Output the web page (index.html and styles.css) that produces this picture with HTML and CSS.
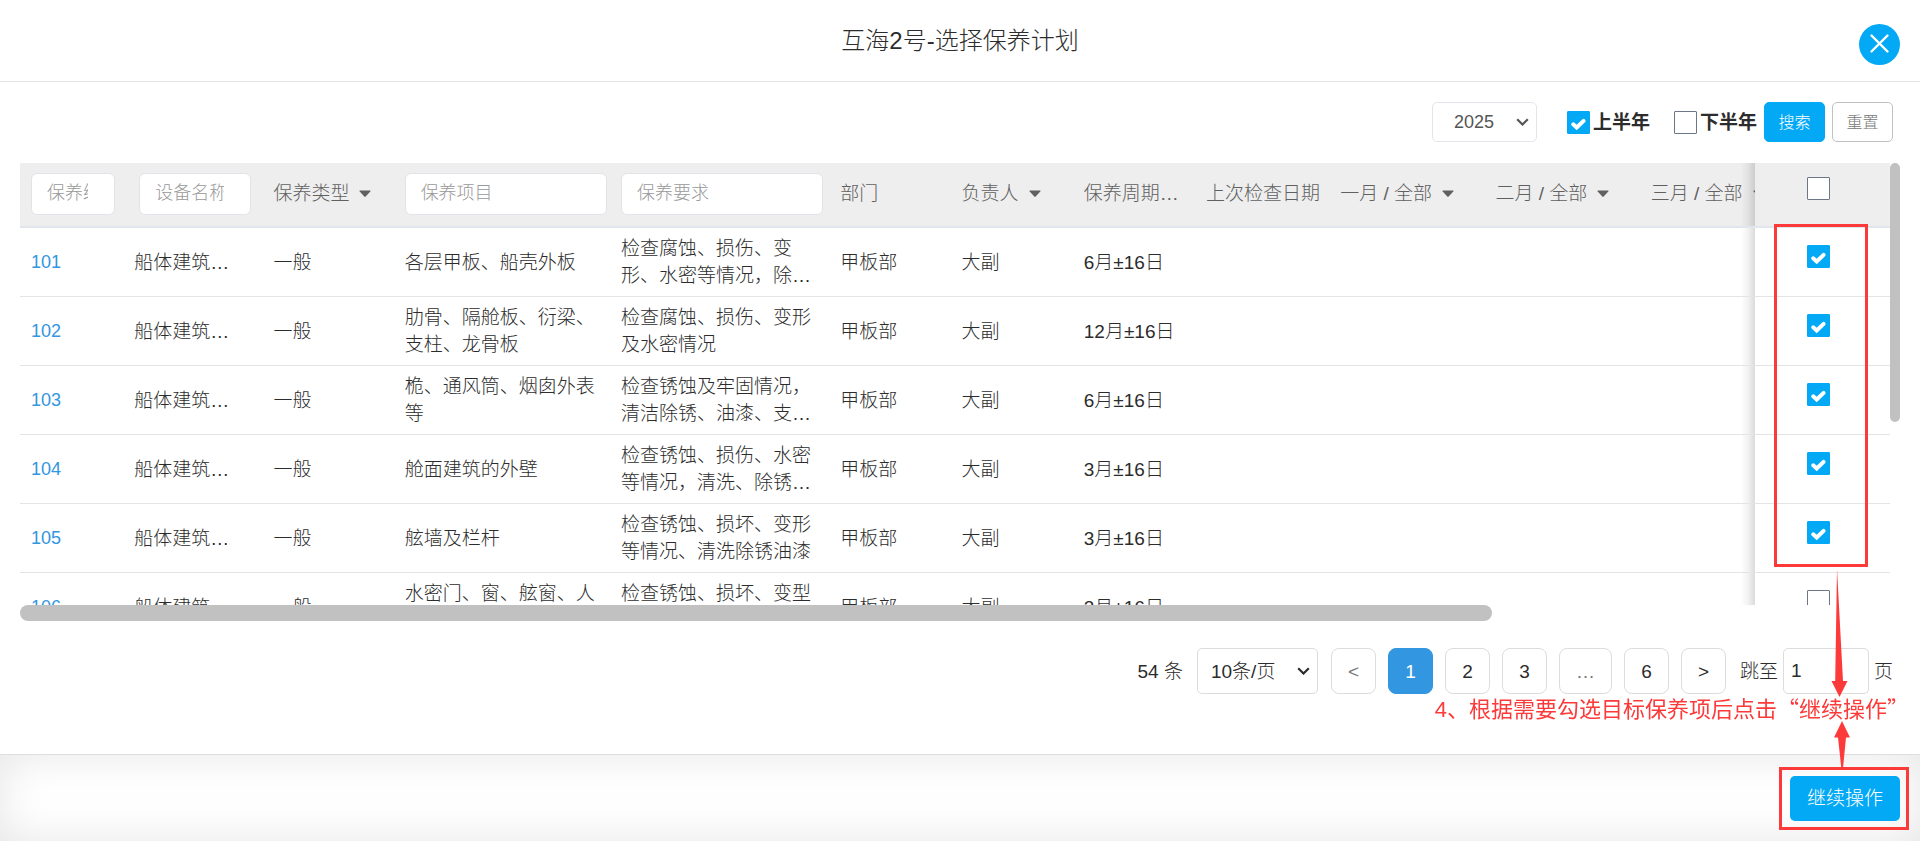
FILE: index.html
```html
<!DOCTYPE html>
<html lang="zh-CN">
<head>
<meta charset="utf-8">
<title>互海2号-选择保养计划</title>
<link rel="stylesheet" href="styles.css">
</head>
<body>
<svg class="defs" aria-hidden="true">
  <symbol id="tick" viewBox="0 0 23 23"><path d="M6.200 13.300 9.700 16.500 16.600 9.900" fill="none" stroke="#fff" stroke-width="4" stroke-linecap="round" stroke-linejoin="miter"/></symbol>
  <symbol id="caret" viewBox="0 0 12 7"><path d="M1 .5h10q.9.2.3 1L6.7 6.4q-.7.6-1.4 0L.7 1.5Q.2.7 1 .5Z" fill="currentColor"/></symbol>
  <symbol id="chevron" viewBox="0 0 13 8"><path d="M1.200 1.200 6.500 6.500 11.800 1.200" fill="none" stroke="currentColor" stroke-width="2.200"/></symbol>
</svg>

<header class="title-bar">
  <h1 class="title">互海2号-选择保养计划</h1>
  <button class="close" type="button" aria-label="关闭"><svg viewBox="0 0 41 41"><path d="M12.5 11.500 28.500 27.500M28.500 11.500 12.500 27.500" stroke="#fff" stroke-width="2.400" stroke-linecap="round"/></svg></button>
</header>

<main class="content">
  <form class="toolbar">
    <span class="select year"><select aria-label="年份"><option>2025</option></select><svg><use href="#chevron"/></svg></span>
    <label class="half"><span class="check"><input type="checkbox" checked><svg><use href="#tick"/></svg></span>上半年</label>
    <label class="half"><span class="check"><input type="checkbox"><svg><use href="#tick"/></svg></span>下半年</label>
    <button class="btn btn-primary" type="button">搜索</button>
    <button class="btn btn-plain" type="button">重置</button>
  </form>

  <div class="table-area">
    <div class="viewport">
      <table class="plans">
        <colgroup>
          <col class="c-no"><col class="c-name"><col class="c-type"><col class="c-item"><col class="c-demand"><col class="c-dept"><col class="c-person"><col class="c-person"><col class="c-date"><col class="c-month"><col class="c-month"><col class="c-month"><col class="c-month"><col class="c-month"><col class="c-month"><col class="c-pick">
        </colgroup>
        <thead>
          <tr>
            <th><input class="filter" type="text" placeholder="保养编号" aria-label="保养编号"></th>
            <th class="indent"><input class="filter" type="text" placeholder="设备名称" aria-label="设备名称"></th>
            <th><button class="drop" type="button">保养类型<svg><use href="#caret"/></svg></button></th>
            <th><input class="filter wide" type="text" placeholder="保养项目" aria-label="保养项目"></th>
            <th><input class="filter wide" type="text" placeholder="保养要求" aria-label="保养要求"></th>
            <th>部门</th>
            <th><button class="drop" type="button">负责人<svg><use href="#caret"/></svg></button></th>
            <th><button class="drop" type="button">保养周期…</button></th>
            <th>上次检查日期</th>
            <th><button class="drop" type="button">一月 / 全部<svg><use href="#caret"/></svg></button></th>
            <th><button class="drop" type="button">二月 / 全部<svg><use href="#caret"/></svg></button></th>
            <th><button class="drop" type="button">三月 / 全部<svg><use href="#caret"/></svg></button></th>
            <th></th><th></th><th></th>
            <th class="pick"><span class="check"><input type="checkbox" aria-label="全选"><svg><use href="#tick"/></svg></span></th>
          </tr>
        </thead>
        <tbody>
          <tr>
            <td><a href="#101">101</a></td><td>船体建筑…</td><td>一般</td><td>各层甲板、船壳外板</td><td>检查腐蚀、损伤、变形、水密等情况，除…</td><td>甲板部</td><td>大副</td><td>6月±16日</td><td></td><td></td><td></td><td></td><td></td><td></td><td></td>
            <td class="pick"><span class="check"><input type="checkbox" aria-label="选择 101" checked><svg><use href="#tick"/></svg></span></td>
          </tr>
          <tr>
            <td><a href="#102">102</a></td><td>船体建筑…</td><td>一般</td><td>肋骨、隔舱板、衍梁、支柱、龙骨板</td><td>检查腐蚀、损伤、变形及水密情况</td><td>甲板部</td><td>大副</td><td>12月±16日</td><td></td><td></td><td></td><td></td><td></td><td></td><td></td>
            <td class="pick"><span class="check"><input type="checkbox" aria-label="选择 102" checked><svg><use href="#tick"/></svg></span></td>
          </tr>
          <tr>
            <td><a href="#103">103</a></td><td>船体建筑…</td><td>一般</td><td>桅、通风筒、烟囱外表等</td><td>检查锈蚀及牢固情况，清洁除锈、油漆、支…</td><td>甲板部</td><td>大副</td><td>6月±16日</td><td></td><td></td><td></td><td></td><td></td><td></td><td></td>
            <td class="pick"><span class="check"><input type="checkbox" aria-label="选择 103" checked><svg><use href="#tick"/></svg></span></td>
          </tr>
          <tr>
            <td><a href="#104">104</a></td><td>船体建筑…</td><td>一般</td><td>舱面建筑的外壁</td><td>检查锈蚀、损伤、水密等情况，清洗、除锈…</td><td>甲板部</td><td>大副</td><td>3月±16日</td><td></td><td></td><td></td><td></td><td></td><td></td><td></td>
            <td class="pick"><span class="check"><input type="checkbox" aria-label="选择 104" checked><svg><use href="#tick"/></svg></span></td>
          </tr>
          <tr>
            <td><a href="#105">105</a></td><td>船体建筑…</td><td>一般</td><td>舷墙及栏杆</td><td>检查锈蚀、损坏、变形等情况、清洗除锈油漆</td><td>甲板部</td><td>大副</td><td>3月±16日</td><td></td><td></td><td></td><td></td><td></td><td></td><td></td>
            <td class="pick"><span class="check"><input type="checkbox" aria-label="选择 105" checked><svg><use href="#tick"/></svg></span></td>
          </tr>
          <tr>
            <td><a href="#106">106</a></td><td>船体建筑…</td><td>一般</td><td>水密门、窗、舷窗、人孔盖</td><td>检查锈蚀、损坏、变型等情况</td><td>甲板部</td><td>大副</td><td>3月±16日</td><td></td><td></td><td></td><td></td><td></td><td></td><td></td>
            <td class="pick"><span class="check"><input type="checkbox" aria-label="选择 106"><svg><use href="#tick"/></svg></span></td>
          </tr>
        </tbody>
      </table>
    </div>
    <div class="track-y"><div class="thumb-y"></div></div>
    <div class="track-x"><div class="thumb-x"></div></div>
  </div>

  <nav class="pager" aria-label="分页">
    <span class="total">54 条</span>
    <span class="select size"><select aria-label="每页条数"><option>10条/页</option></select><svg><use href="#chevron"/></svg></span>
    <button class="page muted" type="button">&lt;</button>
    <button class="page current" type="button">1</button>
    <button class="page" type="button">2</button>
    <button class="page" type="button">3</button>
    <button class="page gap muted" type="button">…</button>
    <button class="page" type="button">6</button>
    <button class="page" type="button">&gt;</button>
    <label class="jump">跳至<input type="text" value="1">页</label>
  </nav>
</main>

<footer class="actions">
  <button class="btn-next" type="button">继续操作</button>
</footer>

<div class="mark mark-rows"></div>
<div class="mark mark-next"></div>
<svg class="arrow arrow-down" viewBox="0 0 18 130"><path d="M6 1 12 113h4.500L8.500 129 .5 113h3.700Z"/></svg>
<svg class="arrow arrow-up" viewBox="0 0 18 48"><path d="M9 0 17 16.500h-4L10 47H8.300L5 16.500H1Z"/></svg>
<p class="note">4、根据需要勾选目标保养项后点击<span class="quote">“</span>继续操作<span class="quote">”</span></p>
</body>
</html>
```
FILE: styles.css
```css
* { box-sizing: border-box; }

body {
  position: relative;
  display: flex;
  flex-direction: column;
  height: 100vh;
  margin: 0;
  overflow: hidden;
  background: #fff;
  color: #2c2c2c;
  font: 300 19px/27px "Liberation Sans", "Noto Sans CJK SC", sans-serif;
}

button, input, select { font: inherit; color: inherit; }
button { padding: 0; cursor: pointer; }
.defs { position: absolute; width: 0; height: 0; }

/* Title */
.title-bar {
  display: grid;
  grid-template-columns: 1fr auto 1fr;
  align-items: center;
  height: 82px;
  padding: 0 20px;
  border-bottom: 1px solid #e2e2e2;
}
.title { grid-column: 2; margin: 0; font-size: 24px; font-weight: 300; line-height: 36px; }
.close {
  justify-self: end;
  width: 41px;
  height: 41px;
  margin-top: 8px;
  border: 0;
  border-radius: 50%;
  background: #03a9f4;
}
.close svg { display: block; }

.content {
  display: flex;
  flex: 1;
  flex-direction: column;
  min-height: 0;
  padding: 20px 20px 60px;
}

/* Drop-downs: the chevron shares the select's grid cell */
.select { display: inline-grid; align-items: center; }
.select select, .select svg { grid-area: 1 / 1; }
.select select {
  appearance: none;
  width: 100%;
  height: 100%;
  border: 1px solid #dcdcdc;
  border-radius: 5px;
  background: #fff;
}
.select svg { justify-self: end; width: 13px; height: 8px; margin-right: 8px; pointer-events: none; }

/* Toolbar */
.toolbar {
  display: flex;
  align-items: center;
  justify-content: flex-end;
  height: 40px;
  margin-bottom: 21px;
  padding-right: 7px;
}
.year { width: 105px; height: 40px; margin-right: 30px; color: #555; font-size: 18px; }
.year select { padding: 0 24px 0 21px; border-color: #e2e6ea; }
.half { display: flex; align-items: center; gap: 3px; margin-right: 24px; font-weight: 700; }
.half + .half { margin-right: 7px; }
.btn { width: 61px; height: 40px; border: 1px solid #03a9f4; border-radius: 5px; font-size: 16px; }
.btn-primary { margin-right: 7px; background: #03a9f4; color: #fff; }
.btn-plain { border-color: #bfc1c5; background: #fff; color: #777; }

.check { display: inline-grid; width: 23px; height: 23px; }
.check input, .check svg { grid-area: 1 / 1; width: 23px; height: 23px; margin: 0; }
.check input { appearance: none; border: 1px solid #6b7785; border-radius: 1px; background: #fff; }
.check svg { visibility: hidden; pointer-events: none; }
.check input:checked { border-color: #03a9f4; background: #03a9f4; }
.check input:checked + svg { visibility: visible; }

/* Table */
.table-area {
  display: grid;
  flex: 1;
  grid-template: minmax(0, 1fr) 16px / minmax(0, 1fr) 10px;
  min-height: 0;
}
.viewport { overflow: hidden; }
.plans { width: 2376px; border-spacing: 0; table-layout: fixed; }
.c-no { width: 103px; }
.c-name { width: 139px; }
.c-type { width: 131px; }
.c-item { width: 216px; }
.c-demand { width: 219px; }
.c-dept { width: 121px; }
.c-person { width: 122px; }
.c-date { width: 134px; }
.c-month { width: 155px; }
.c-pick { width: 135px; }
th {
  height: 65px;
  padding: 0 8px 2px 11px;
  border-bottom: 2px solid #e0e6eb;
  background: #eee;
  color: #606060;
  font-weight: 300;
  text-align: left;
  white-space: nowrap;
}
td { height: 69px; padding: 0 12px 0 11px; border-bottom: 1px solid #e2e4e6; }
th.indent { padding-right: 11px; padding-left: 16px; }
td a { color: #3296e1; font-size: 18px; text-decoration: none; }
.filter {
  display: block;
  width: 100%;
  height: 42px;
  padding: 0 26px 0 15px;
  border: 1px solid #e0e4e8;
  border-radius: 6px;
  background: #fff;
  font-size: 18px;
}
.filter.wide { width: 202px; }
.filter::placeholder { color: #999; opacity: 1; }
.drop { display: flex; align-items: center; gap: 10px; border: 0; background: none; }
.drop svg { width: 12px; height: 7px; }

.plans .pick {
  position: sticky;
  right: 0;
  padding: 14px 0 0 52px;
  line-height: 0;
  vertical-align: top;
}
td.pick { background: #fff; }
.plans tbody .pick { padding-top: 17px; }
.pick::before {
  content: "";
  position: absolute;
  top: 0;
  bottom: 0;
  left: -14px;
  width: 14px;
  background: linear-gradient(to left, rgba(0, 0, 0, .14), rgba(0, 0, 0, .05) 50%, transparent);
}

.thumb-y { height: 259px; border-radius: 5px; background: #c1c1c1; }
.thumb-x { width: 1472px; max-width: 100%; height: 16px; border-radius: 8px; background: #c1c1c1; }

/* Pagination */
.pager {
  display: flex;
  align-items: center;
  justify-content: flex-end;
  gap: 12px;
  height: 46px;
  margin-top: 27px;
  padding-right: 7px;
}
.size { width: 121px; height: 46px; margin: 0 1px 0 2px; }
.size select { padding: 0 24px 0 13px; }
.page { width: 45px; height: 46px; border: 1px solid #dcdcdc; border-radius: 8px; background: #fff; }
.page.gap { width: 53px; }
.page.muted { color: #777; }
.page.current { border-color: #3296e1; background: #3296e1; color: #fff; }
.jump { display: flex; align-items: center; gap: 5px; margin-left: 2px; }
.jump input { width: 86px; height: 46px; padding: 0 7px; border: 1px solid #dcdcdc; border-radius: 5px; }

/* Footer */
.actions {
  display: flex;
  align-items: center;
  justify-content: flex-end;
  height: 87px;
  margin-bottom: 2px;
  padding: 0 20px;
  border-top: 1px solid #dedede;
  box-shadow: inset 0 0 45px rgba(0, 0, 0, .1);
}
.btn-next { width: 110px; height: 45px; border: 0; border-radius: 5px; background: #03a9f4; color: #fff; }

/* Annotations drawn over the page */
.mark { position: absolute; border: 3px solid #fc3a3a; pointer-events: none; }
.mark-rows { top: 224px; right: 52px; width: 94px; height: 343px; }
.mark-next { right: 11px; bottom: 13px; width: 130px; height: 63px; }
.arrow { position: absolute; width: 18px; fill: #fc3a3a; pointer-events: none; }
.arrow-down { top: 568px; right: 71px; height: 130px; }
.arrow-up { right: 69px; bottom: 74px; height: 48px; }
.note {
  position: absolute;
  right: 11px;
  bottom: 117px;
  margin: 0;
  color: #fc3a3a;
  font-size: 22px;
  font-weight: 400;
  line-height: 32px;
}
.quote { font-family: "Noto Sans CJK SC", sans-serif; }
```
